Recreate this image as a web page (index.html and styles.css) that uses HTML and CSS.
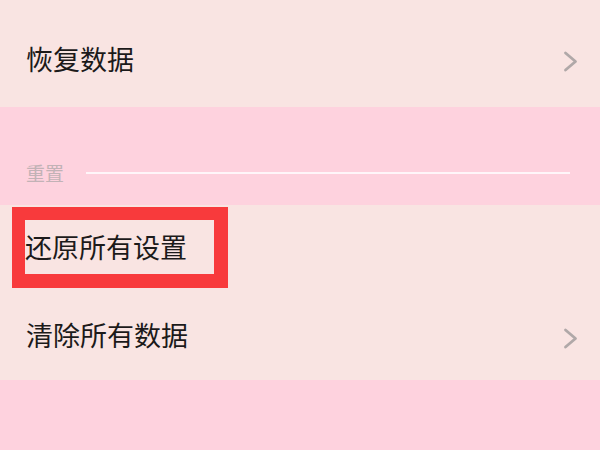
FILE: index.html
```html
<!DOCTYPE html>
<html lang="zh-CN">
<head>
<meta charset="utf-8">
<title>重置</title>
<link rel="stylesheet" href="styles.css">
</head>
<body>
<div class="screen">
  <div class="panel panel-top">
    <div class="row row-first">
      <span class="label">恢复数据</span>
      <svg class="chev" width="15" height="21" viewBox="0 0 15 21"><polyline points="2.5,2 12.5,10.5 2.5,19" fill="none" stroke="#b0a8a8" stroke-width="2.8" stroke-linecap="round" stroke-linejoin="round"/></svg>
    </div>
  </div>
  <div class="band">
    <div class="section-head">
      <span class="section-title">重置</span>
      <span class="section-line"></span>
    </div>
  </div>
  <div class="panel panel-reset">
    <div class="row row-boxed">
      <span class="label boxed">还原所有设置</span>
    </div>
    <div class="row row-clear">
      <span class="label">清除所有数据</span>
      <svg class="chev" width="15" height="21" viewBox="0 0 15 21"><polyline points="2.5,2 12.5,10.5 2.5,19" fill="none" stroke="#b0a8a8" stroke-width="2.8" stroke-linecap="round" stroke-linejoin="round"/></svg>
    </div>
  </div>
  <div class="band band-bottom"></div>
</div>
</body>
</html>
```
FILE: styles.css
```css
html, body {
  margin: 0;
  padding: 0;
}
body {
  width: 600px;
  height: 450px;
  overflow: hidden;
  font-family: "Noto Sans CJK SC", "Noto Sans", sans-serif;
  background: #fed2de;
}
.screen {
  display: flex;
  flex-direction: column;
  width: 600px;
  height: 450px;
}
.panel {
  background: #f9e4e2;
  display: flex;
  flex-direction: column;
}
.panel-top {
  height: 107px;
  padding-top: 10px;
  box-sizing: border-box;
}
.row {
  display: flex;
  align-items: center;
  justify-content: space-between;
  padding: 0 22px 0 26px;
}
.row-first {
  flex: 1;
}
.label {
  font-size: 27px;
  line-height: 36px;
  color: #1c1a1a;
}
.chev {
  display: block;
  margin-top: 6px;
}
.band {
  background: #fed2de;
  height: 98px;
  box-sizing: border-box;
  padding-top: 54px;
}
.section-head {
  display: flex;
  align-items: center;
  padding-left: 26px;
  padding-right: 30px;
}
.section-title {
  font-size: 19px;
  line-height: 24px;
  color: #c2b2b6;
}
.section-line {
  flex: 1;
  height: 2px;
  margin-left: 22px;
  background: rgba(255, 255, 255, 0.8);
}
.panel-reset {
  height: 175px;
}
.row-boxed {
  height: 85px;
  padding-left: 12px;
  justify-content: flex-start;
}
.boxed {
  display: inline-block;
  border-style: solid;
  border-color: #f83a3c;
  border-width: 13px 14px 14px 13px;
  height: 54px;
  line-height: 54px;
  padding: 0 27px 0 0;
}
.row-clear {
  height: 90px;
}
.band-bottom {
  flex: 1;
  height: auto;
  padding: 0;
}
```
